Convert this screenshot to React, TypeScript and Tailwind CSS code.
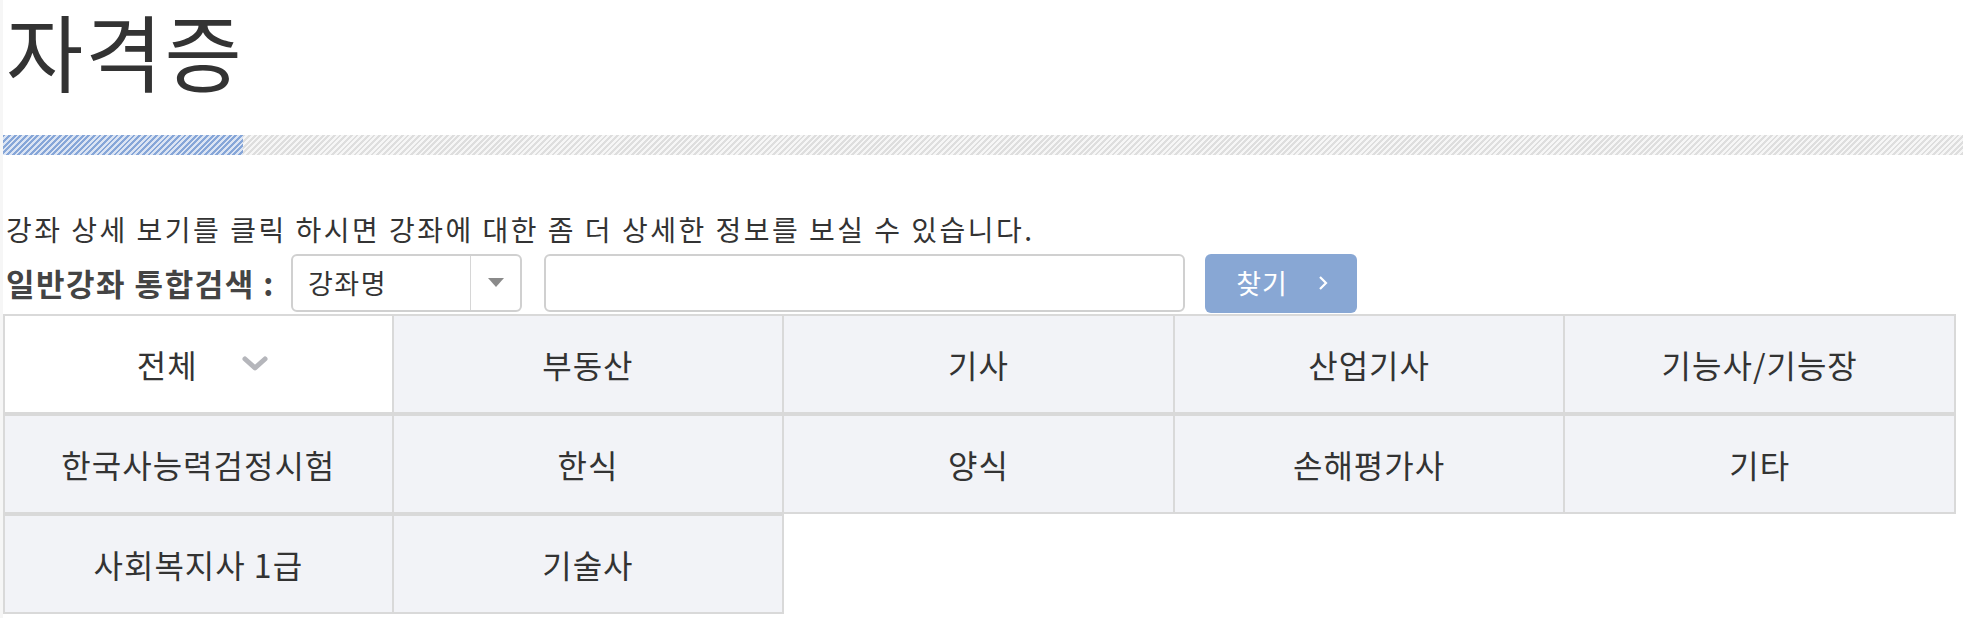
import React from 'react';

const CATEGORIES = [
    '전체',
    '부동산',
    '기사',
    '산업기사',
    '기능사/기능장',
    '한국사능력검정시험',
    '한식',
    '양식',
    '손해평가사',
    '기타',
    '사회복지사 1급',
    '기술사'
];

const FONT = "font-['Noto_Sans_CJK_KR',sans-serif]";

const SelectArrow = () => (
    <svg width="16" height="10" viewBox="0 0 16 10">
        <polygon points="0,0 16,0 8,9" fill="#8a8a8a" />
    </svg>
);

const ChevronDown = () => (
    <svg width="26" height="16" viewBox="0 0 26 16">
        <polyline points="3,3 13,12 23,3" fill="none" stroke="#b5b6bb" strokeWidth="5" strokeLinecap="round" strokeLinejoin="round" />
    </svg>
);

const ChevronRight = () => (
    <svg width="10" height="16" viewBox="0 0 10 16">
        <polyline points="2,2 8,8 2,14" fill="none" stroke="#ffffff" strokeWidth="2.2" />
    </svg>
);

export default function App() {
    return (
        <div className={`${FONT} bg-white text-[#333333] min-h-[618px] w-[1964px] border-l-[3px] border-[#f6f6f6] overflow-hidden`}>
            <h1 className="text-[84px] leading-[100px] tracking-[2px] font-normal pl-[3px] text-[#333333]">자격증</h1>

            <div className="mt-[35px] flex h-[20px] w-[1960px]">
                <div className="w-[240px] h-full bg-[repeating-linear-gradient(135deg,#86a6d8_0px,#86a6d8_2px,#dbe4f3_2px,#dbe4f3_4px)]" />
                <div className="flex-1 h-full bg-[repeating-linear-gradient(135deg,#dedede_0px,#dedede_2px,#f6f6f6_2px,#f6f6f6_4px)]" />
            </div>

            <p className="mt-[56px] pl-[3px] text-[28px] leading-[36px] tracking-[2.5px]">
                강좌 상세 보기를 클릭 하시면 강좌에 대한 좀 더 상세한 정보를 보실 수 있습니다.
            </p>

            <div className="flex items-center h-[60px] mt-[6px]">
                <span className="pl-[3px] text-[31px] font-bold tracking-[1.5px] text-[#444444] w-[288px] whitespace-nowrap">일반강좌 통합검색 :</span>
                <div className="flex items-stretch w-[231px] h-[58px] border-2 border-[#d0d0d0] rounded-[6px] bg-white">
                    <span className="flex-1 flex items-center pl-[15px] text-[27px] tracking-[1.5px]">강좌명</span>
                    <span className="w-[50px] border-l border-[#d6d6d6] flex items-center justify-center">
                        <SelectArrow />
                    </span>
                </div>
                <input className="ml-[22px] w-[641px] h-[58px] border-2 border-[#d0d0d0] rounded-[6px] bg-white outline-none px-3" />
                <button className="ml-[20px] w-[152px] h-[59px] rounded-[6px] bg-[#88a7d4] text-white text-[27px] tracking-[1px] flex items-center justify-center gap-[30px] pl-[2px]">
                    <span>찾기</span>
                    <ChevronRight />
                </button>
            </div>

            <div className="mt-[1px] grid grid-cols-5 w-[1953px]">
                {CATEGORIES.map((name, i) => (
                    <div
                        key={name}
                        className={`h-[100px] flex items-center justify-center border-t-2 border-b-2 border-r-2 border-[#d9d9d9] text-[32px] tracking-[1px] text-[#333333] ${i % 5 === 0 ? 'border-l-2' : ''} ${i === 0 ? 'bg-white' : 'bg-[#f2f3f7]'}`}
                    >
                        {i === 0 ? (
                            <span className="flex items-center gap-[44px] pl-[8px]">
                                <span>{name}</span>
                                <ChevronDown />
                            </span>
                        ) : (
                            <span>{name}</span>
                        )}
                    </div>
                ))}
            </div>
        </div>
    );
}
